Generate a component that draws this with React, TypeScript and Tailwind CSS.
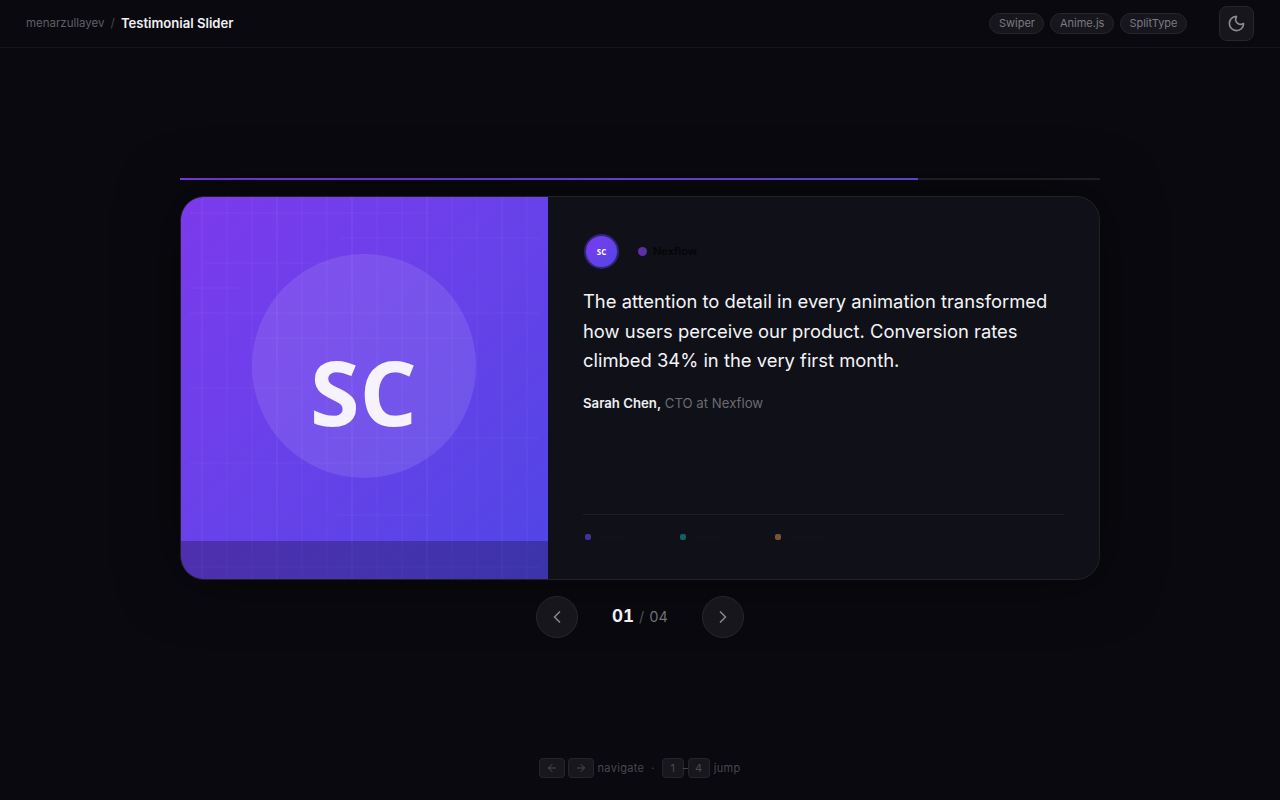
import { ChevronLeft, ChevronRight, Moon, ArrowLeft, ArrowRight } from 'lucide-react';

const tags = ['Swiper', 'Anime.js', 'SplitType'];

const stats = [
  { label: 'Active', dot: 'bg-[#43309c]' },
  { label: 'Teams', dot: 'bg-[#0f6268]' },
  { label: 'Revenue', dot: 'bg-[#7d5230]' },
];

const vLines = [202, 227, 252, 277, 302, 327, 352, 377, 402, 427, 452, 477, 502, 527];
const hLines = [
  [190, 430, 213], [340, 540, 238], [205, 330, 263], [190, 240, 288], [190, 540, 313], [250, 470, 338],
  [190, 300, 388], [330, 540, 438], [190, 420, 463], [337, 433, 515], [190, 540, 567],
];

function GridLines() {
  return (
    <svg className="absolute inset-0 h-full w-full" viewBox="181 197 367 382" preserveAspectRatio="none">
      {vLines.map((x, i) => (
        <line key={x} x1={x} x2={x} y1={197} y2={579} stroke="white" strokeOpacity={i % 3 === 0 ? 0.08 : 0.05} />
      ))}
      {hLines.map(([a, b, y]) => (
        <line key={y} x1={a} x2={b} y1={y} y2={y} stroke="white" strokeOpacity={0.05} />
      ))}
    </svg>
  );
}

function Kbd({ children, wide }: { children: React.ReactNode; wide?: boolean }) {
  return (
    <span className={`flex h-5 items-center justify-center rounded border border-[#25252c] bg-[#17171d] text-[11px] text-[#4b4b52] ${wide ? 'w-[26px]' : 'w-[22px]'}`}>
      {children}
    </span>
  );
}

export default function App() {
  return (
    <div className="flex h-screen flex-col overflow-hidden bg-[#09090f] font-['Inter',sans-serif] text-white">
      {/* Header */}
      <header className="flex h-12 shrink-0 items-center justify-between border-b border-[#15151b] px-[26px]">
        <div className="flex items-center gap-[6px]">
          <span className="text-[11.5px] text-[#5f5f66]">menarzullayev</span>
          <span className="text-xs text-[#46464d]">/</span>
          <span className="text-[13.1px] font-semibold text-[#f0f0f2]">Testimonial Slider</span>
        </div>
        <div className="flex items-center gap-8">
          <div className="flex items-center gap-[6px]">
            {tags.map((tag) => (
              <span key={tag} className="flex h-[21px] items-center rounded-full border border-[#26262d] bg-[#16161c] px-[8.5px] text-[11px] text-[#7b7b82]">
                {tag}
              </span>
            ))}
          </div>
          <button className="flex h-[35px] w-[35px] items-center justify-center rounded-lg border border-[#26262d] bg-[#16161c] text-[#8c8c92]">
            <Moon className="h-[19px] w-[19px]" />
          </button>
        </div>
      </header>

      <main className="mx-auto flex w-[920px] flex-1 flex-col pt-[130px]">
        {/* Progress */}
        <div className="h-0.5 w-full bg-[#222228]">
          <div className="h-full w-[80.2%] bg-gradient-to-r from-[#7c3aed] to-[#6a4ff0]" />
        </div>

        {/* Card */}
        <div className="mt-4 flex h-[384px] overflow-hidden rounded-3xl border border-[#212127] bg-[#0f1018] shadow-[0_0_60px_rgba(0,0,0,0.5)]">
          <div className="relative flex w-[367px] shrink-0 items-center justify-center bg-gradient-to-br from-[#7c3aed] to-[#4f46e5] pb-[44px]">
            <GridLines />
            <div className="relative -ml-[2px] flex h-56 w-56 items-center justify-center rounded-full bg-white/10 pt-[50px]">
              <span className="font-['Open_Sans',sans-serif] text-[90px] font-bold text-[#f6f3ff]">SC</span>
            </div>
            <div className="absolute inset-x-0 bottom-0 h-[38px] bg-black/25" />
          </div>

          <div className="flex flex-1 flex-col pb-[35px] pl-[35px] pr-[35px] pt-[37px]">
            <div className="flex items-center gap-[19px]">
              <div className="ml-[1px] flex h-[35px] w-[35px] items-center justify-center rounded-full border-2 border-[#2f2478] bg-gradient-to-br from-[#7c3aed] to-[#4f46e5]">
                <span className="font-['Open_Sans',sans-serif] text-[8px] font-bold">SC</span>
              </div>
              <div className="flex items-center gap-[6px]">
                <span className="h-[9px] w-[9px] rounded-full bg-[#5d2ea8]" />
                <span className="text-[11px] font-semibold text-[#050507]">Nexflow</span>
              </div>
            </div>

            <p className="mt-[18px] text-[18.4px] leading-[29.5px] text-[#f4f4f6]">
              The attention to detail in every animation transformed how users perceive our product. Conversion rates climbed 34% in the very first month.
            </p>

            <p className="mt-[18px] text-[13.2px]">
              <span className="font-semibold text-[#f0f0f2]">Sarah Chen,</span>{' '}
              <span className="text-[#6b6b72]">CTO at Nexflow</span>
            </p>

            <div className="mt-auto border-t border-[#1f2026] pl-[2px] pt-4">
              <div className="flex items-center">
                {stats.map((s) => (
                  <div key={s.label} className="flex w-[95px] items-center gap-2">
                    <span className={`h-1.5 w-1.5 rounded-[2px] ${s.dot}`} />
                    <span className="text-[9px] text-[#14151b]">{s.label}</span>
                  </div>
                ))}
              </div>
            </div>
          </div>
        </div>

        {/* Controls */}
        <div className="mt-4 flex items-center justify-center gap-[34px]">
          <button className="flex h-[42px] w-[42px] items-center justify-center rounded-full border border-[#26262d] bg-[#16161c] text-[#85858b]">
            <ChevronLeft className="h-5 w-5" />
          </button>
          <div className="flex w-[56px] items-baseline justify-center gap-[5px] whitespace-nowrap tabular-nums">
            <span className="text-[17px] font-bold text-[#f0f0f2]">01</span>
            <span className="text-[14.4px] text-[#4f4f56]">/</span>
            <span className="text-[14.4px] text-[#707074]">04</span>
          </div>
          <button className="flex h-[42px] w-[42px] items-center justify-center rounded-full border border-[#26262d] bg-[#16161c] text-[#85858b]">
            <ChevronRight className="h-5 w-5" />
          </button>
        </div>
      </main>

      {/* Keyboard hints */}
      <footer className="flex h-[42px] shrink-0 items-start justify-center gap-[3px] text-[11px] tracking-[0.03em] text-[#47474e]">
        <Kbd wide><ArrowLeft className="h-3 w-3" /></Kbd>
        <Kbd wide><ArrowRight className="h-3 w-3" /></Kbd>
        <span className="leading-5">navigate</span>
        <span className="mx-[4px] leading-5">·</span>
        <Kbd>1</Kbd>
        <span className="-mx-[4px] leading-5">–</span>
        <Kbd>4</Kbd>
        <span className="ml-[1px] leading-5">jump</span>
      </footer>
    </div>
  );
}
